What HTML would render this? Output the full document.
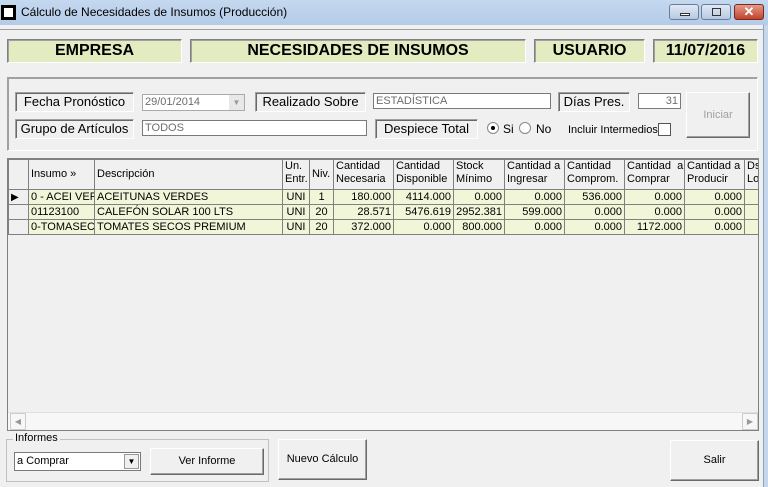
<!DOCTYPE html><html><head><style>
*{box-sizing:border-box;margin:0;padding:0}
body{width:768px;height:487px;background:#f0f0f0;font-family:"Liberation Sans",sans-serif;position:relative;overflow:hidden;font-size:11px;color:#000}
.a{position:absolute}
.tb{left:0;top:0;width:768px;height:25px;background:linear-gradient(#c4d8ef,#b4cbe8)}
.hd{background:#e3ecc0;border:1px solid;border-color:#808080 #fff #fff #808080;box-shadow:inset 1px 1px 0 #a0a0a0;font-weight:bold;font-size:16px;text-align:center;line-height:21px}
.lb{border:1px solid;border-color:#a0a0a0 #fff #fff #a0a0a0;box-shadow:inset 1px 1px 0 #696969;font-size:13px;text-align:center;line-height:18px;background:#f0f0f0}
.in{background:#fff;border:1px solid #7a7a7a;color:#6d6d6d;font-size:11px;line-height:15px;padding-left:2px}
.btn{border:1px solid;border-color:#fff #6a6a6a #6a6a6a #fff;box-shadow:inset -1px -1px 0 #a0a0a0;background:#f0f0f0;text-align:center;font-size:11px}
table{border-collapse:collapse;font-size:11px}
td{border:1px solid #808080;padding:0 2px;white-space:nowrap;overflow:hidden;height:15px}
.h td{background:#f0f0f0;vertical-align:top;line-height:13px;height:30px}
.r td{background:#f2f6d9}
.n{text-align:right}.c{text-align:center}
</style></head><body>
<div class="a tb"></div>
<div class="a" style="left:1px;top:5px;width:15px;height:15px;border:3px solid #000;background:#fff"></div>
<div class="a" style="left:21px;top:5px;font-size:12px">Cálculo de Necesidades de Insumos (Producción)</div>
<div class="a" style="left:669px;top:4px;width:30px;height:16px;border:1px solid #6b7d96;border-radius:3px;background:linear-gradient(#dfe8f4,#b7c9e2)"><div class="a" style="left:10px;top:8px;width:10px;height:3px;border:1px solid #333;background:#fff"></div></div>
<div class="a" style="left:701px;top:4px;width:30px;height:16px;border:1px solid #6b7d96;border-radius:3px;background:linear-gradient(#dfe8f4,#b7c9e2)"><div class="a" style="left:10px;top:3px;width:9px;height:8px;border:1px solid #333"></div></div>
<div class="a" style="left:734px;top:4px;width:30px;height:16px;border:1px solid #7a2a1c;border-radius:3px;background:linear-gradient(#e39a8a,#c2432c);color:#fff;font-weight:bold;font-size:13px;text-align:center;line-height:14px">✕</div>
<div class="a" style="left:763px;top:25px;width:5px;height:462px;background:#c6d7ec;border-left:1px solid #8ba2c0"></div>
<div class="a" style="left:0;top:29px;width:763px;height:1px;background:#a0a0a0"></div>

<div class="a hd" style="left:7px;top:39px;width:175px;height:24px">EMPRESA</div>
<div class="a hd" style="left:190px;top:39px;width:336px;height:24px">NECESIDADES DE INSUMOS</div>
<div class="a hd" style="left:534px;top:39px;width:111px;height:24px">USUARIO</div>
<div class="a hd" style="left:653px;top:39px;width:105px;height:24px">11/07/2016</div>

<div class="a" style="left:7px;top:77px;width:751px;height:74px;border:1px solid;border-color:#a0a0a0 #fff #fff #a0a0a0;box-shadow:1px 1px 0 #a0a0a0 inset"></div>
<div class="a lb" style="left:15px;top:92px;width:119px;height:20px">Fecha Pronóstico</div>
<div class="a in" style="left:142px;top:94px;width:103px;height:17px;border-color:#aaa">29/01/2014<div class="a" style="right:0;top:0;width:15px;height:15px;background:#e8e8e8;color:#999;font-size:8px;text-align:center">▼</div></div>
<div class="a lb" style="left:255px;top:92px;width:111px;height:20px">Realizado Sobre</div>
<div class="a in" style="left:373px;top:93px;width:178px;height:16px">ESTADÍSTICA</div>
<div class="a lb" style="left:558px;top:92px;width:72px;height:20px">Días Pres.</div>
<div class="a in" style="left:638px;top:93px;width:43px;height:16px;text-align:right;padding-right:2px">31</div>
<div class="a btn" style="left:686px;top:92px;width:64px;height:46px;line-height:44px;color:#a0a0a0">Iniciar</div>
<div class="a lb" style="left:15px;top:119px;width:119px;height:20px">Grupo de Artículos</div>
<div class="a in" style="left:142px;top:120px;width:225px;height:16px">TODOS</div>
<div class="a lb" style="left:375px;top:119px;width:103px;height:20px">Despiece Total</div>
<div class="a" style="left:487px;top:122px;width:12px;height:12px;border:1px solid #888;border-radius:50%;background:#fff"><div class="a" style="left:3px;top:3px;width:4px;height:4px;border-radius:50%;background:#000"></div></div>
<div class="a" style="left:503px;top:122px;font-size:12px">Si</div>
<div class="a" style="left:519px;top:122px;width:12px;height:12px;border:1px solid #888;border-radius:50%;background:#fff"></div>
<div class="a" style="left:536px;top:122px;font-size:12px">No</div>
<div class="a" style="left:568px;top:124px;font-size:11px">Incluir Intermedios</div>
<div class="a" style="left:658px;top:123px;width:13px;height:13px;border:1px solid #555;background:#fff"></div>

<div class="a" style="left:7px;top:158px;width:752px;height:273px;border:1px solid #808080;background:#f0f0f0;overflow:hidden">
<table style="width:780px;table-layout:fixed">
<colgroup><col style="width:20px"><col style="width:66px"><col style="width:188px"><col style="width:27px"><col style="width:24px"><col style="width:60px"><col style="width:60px"><col style="width:51px"><col style="width:60px"><col style="width:60px"><col style="width:60px"><col style="width:60px"><col style="width:44px"></colgroup>
<tr class="h"><td></td><td style="line-height:28px">Insumo »</td><td style="line-height:28px">Descripción</td><td>Un.<br>Entr.</td><td style="line-height:28px">Niv.</td><td>Cantidad<br>Necesaria</td><td>Cantidad<br>Disponible</td><td>Stock<br>Mínimo</td><td>Cantidad a<br>Ingresar</td><td>Cantidad<br>Comprom.</td><td>Cantidad &nbsp;a<br>Comprar</td><td>Cantidad a<br>Producir</td><td>Ds<br>Lo</td></tr>
<tr class="r"><td style="background:#f0f0f0;font-size:10px">▶</td><td>0 - ACEI VER</td><td>ACEITUNAS VERDES</td><td class="c">UNI</td><td class="c">1</td><td class="n">180.000</td><td class="n">4114.000</td><td class="n">0.000</td><td class="n">0.000</td><td class="n">536.000</td><td class="n">0.000</td><td class="n">0.000</td><td></td></tr>
<tr class="r"><td style="background:#f0f0f0"></td><td>01123100</td><td>CALEFÓN SOLAR 100 LTS</td><td class="c">UNI</td><td class="c">20</td><td class="n">28.571</td><td class="n">5476.619</td><td class="n">2952.381</td><td class="n">599.000</td><td class="n">0.000</td><td class="n">0.000</td><td class="n">0.000</td><td></td></tr>
<tr class="r"><td style="background:#f0f0f0"></td><td>0-TOMASECO</td><td>TOMATES SECOS PREMIUM</td><td class="c">UNI</td><td class="c">20</td><td class="n">372.000</td><td class="n">0.000</td><td class="n">800.000</td><td class="n">0.000</td><td class="n">0.000</td><td class="n">1172.000</td><td class="n">0.000</td><td></td></tr>
</table>
<div class="a" style="left:0;top:253px;width:750px;height:18px;background:#f7f7f7;border-top:1px solid #e0e0e0"><div class="a" style="left:2px;top:0;width:16px;height:17px;border:1px solid #ccc;color:#999;font-size:8px;text-align:center;line-height:16px">◀</div><div class="a" style="right:0;top:0;width:16px;height:17px;border:1px solid #ccc;color:#999;font-size:8px;text-align:center;line-height:16px">▶</div></div>
</div>

<div class="a" style="left:6px;top:439px;width:263px;height:43px;border:1px solid #c0c0c0"></div>
<div class="a" style="left:13px;top:432px;background:#f0f0f0;padding:0 2px;font-size:11px">Informes</div>
<div class="a" style="left:14px;top:452px;width:127px;height:19px;background:#fff;border:1px solid #7a7a7a;font-size:11px;line-height:17px;padding-left:2px">a Comprar<div class="a" style="right:1px;top:1px;width:15px;height:15px;background:#f0f0f0;border:1px solid #999;font-size:8px;text-align:center;line-height:13px">▼</div></div>
<div class="a btn" style="left:150px;top:448px;width:114px;height:27px;line-height:25px">Ver Informe</div>
<div class="a btn" style="left:278px;top:439px;width:89px;height:41px;line-height:38px">Nuevo Cálculo</div>
<div class="a btn" style="left:670px;top:440px;width:89px;height:41px;line-height:39px">Salir</div>
</body></html>
